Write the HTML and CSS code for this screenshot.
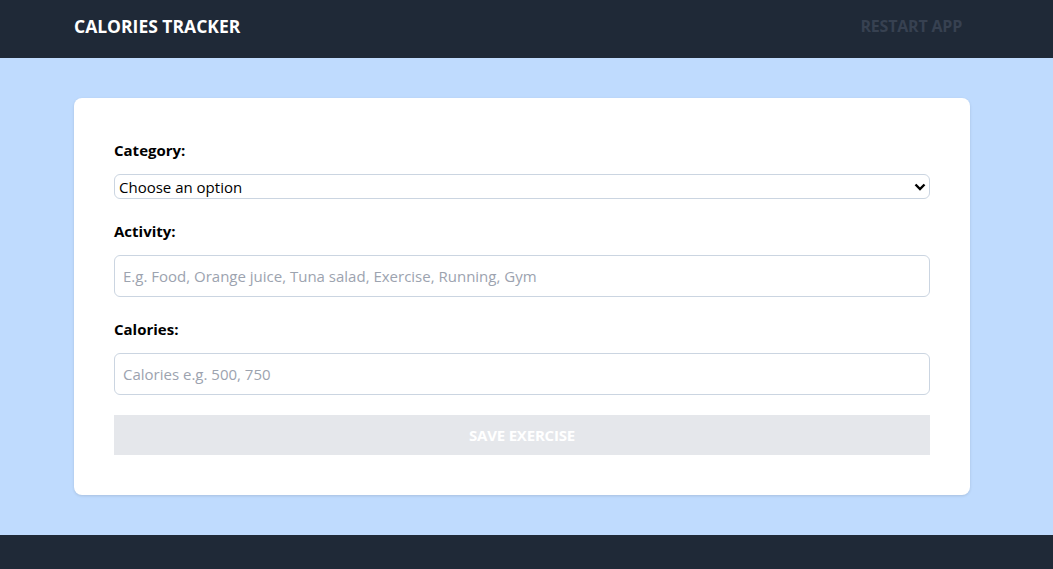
FILE: index.html
```html
<!DOCTYPE html>
<html lang="en">
<head>
  <meta charset="UTF-8" />
  <meta name="viewport" content="width=device-width, initial-scale=1.0"/>
  <title>Calories Tracker</title>
  <link rel="stylesheet" href="styles.css">
</head>
<body>
  <header class="topbar">
    <div class="wrap topbar-inner">
      <div class="brand">CALORIES TRACKER</div>
      <a class="restart" href="#">RESTART APP</a>
    </div>
  </header>

  <main class="main">
    <div class="wrap">
      <form class="card" onsubmit="return false;">
        <label class="label" for="category">Category:</label>
        <div class="select-box">
          <select id="category" class="select">
            <option>Choose an option</option>
            <option>Food</option>
            <option>Exercise</option>
          </select>
          <svg class="chev" width="12" height="8" viewBox="0 0 12 8"><path d="M1.5 1.5 L6 6 L10.5 1.5" fill="none" stroke="#000" stroke-width="2.4"/></svg>
        </div>

        <label class="label gap" for="activity">Activity:</label>
        <input id="activity" class="input" type="text" placeholder="E.g. Food, Orange juice, Tuna salad, Exercise, Running, Gym">

        <label class="label gap" for="calories">Calories:</label>
        <input id="calories" class="input" type="text" placeholder="Calories e.g. 500, 750">

        <button class="btn" disabled>SAVE EXERCISE</button>
      </form>
    </div>
  </main>

  <footer class="footer"></footer>
</body>
</html>
```

FILE: styles.css
```css
:root {
  --dark:#1f2937;
  --blue:#bfdbfe;
  --border:#cbd5e1;
  font-family: "Segoe UI","Open Sans","Noto Sans",sans-serif;
}
*{box-sizing:border-box;}
body {
  margin:0;
  background: var(--dark);
  min-height:100vh;
  display:flex;
  flex-direction:column;
}
.wrap {
  width:896px;
  margin-left:74px;
}
.topbar {background: var(--dark); height:58px;}
.topbar-inner {
  height:100%;
  display:flex;
  align-items:center;
  justify-content:space-between;
  padding-right:8px;
  padding-bottom:6px;
}
.brand {color:#fff; font-weight:700; font-size:17.5px; letter-spacing:0;}
.restart {color:#374151; font-weight:700; font-size:16px; text-decoration:none; letter-spacing:-.2px;}
.main {background: var(--blue); padding:40px 0;}
.card {
  background:#fff;
  border-radius:8px;
  padding:40px;
  display:flex;
  flex-direction:column;
  box-shadow:0 1px 3px rgba(0,0,0,.12);
}
.label {font-weight:700; font-size:15px; line-height:24px; color:#000; margin-bottom:12px;}
.label.gap {margin-top:20px; margin-bottom:12px;}
.select-box {position:relative;}
.select {
  width:100%;
  height:25px;
  appearance:none;
  -webkit-appearance:none;
  background:#fff;
  border:1px solid var(--border);
  border-radius:6px;
  padding:0 4px;
  font-family:inherit;
  font-size:15px;
  color:#000;
}
.chev {position:absolute; right:4px; top:9px; pointer-events:none;}
.input {
  height:42px;
  border:1px solid var(--border);
  border-radius:6px;
  padding:0 8px;
  font-family:inherit;
  font-size:15px;
  color:#000;
}
.input::placeholder {color:#9ca3af;}
.btn {
  margin-top:20px;
  height:40px;
  border:none;
  background:#e5e7eb;
  color:#fff;
  font-family:inherit;
  font-weight:700;
  font-size:15px;
  letter-spacing:-.2px;
}
.footer {flex:1; background: var(--dark); min-height:34px;}
```
